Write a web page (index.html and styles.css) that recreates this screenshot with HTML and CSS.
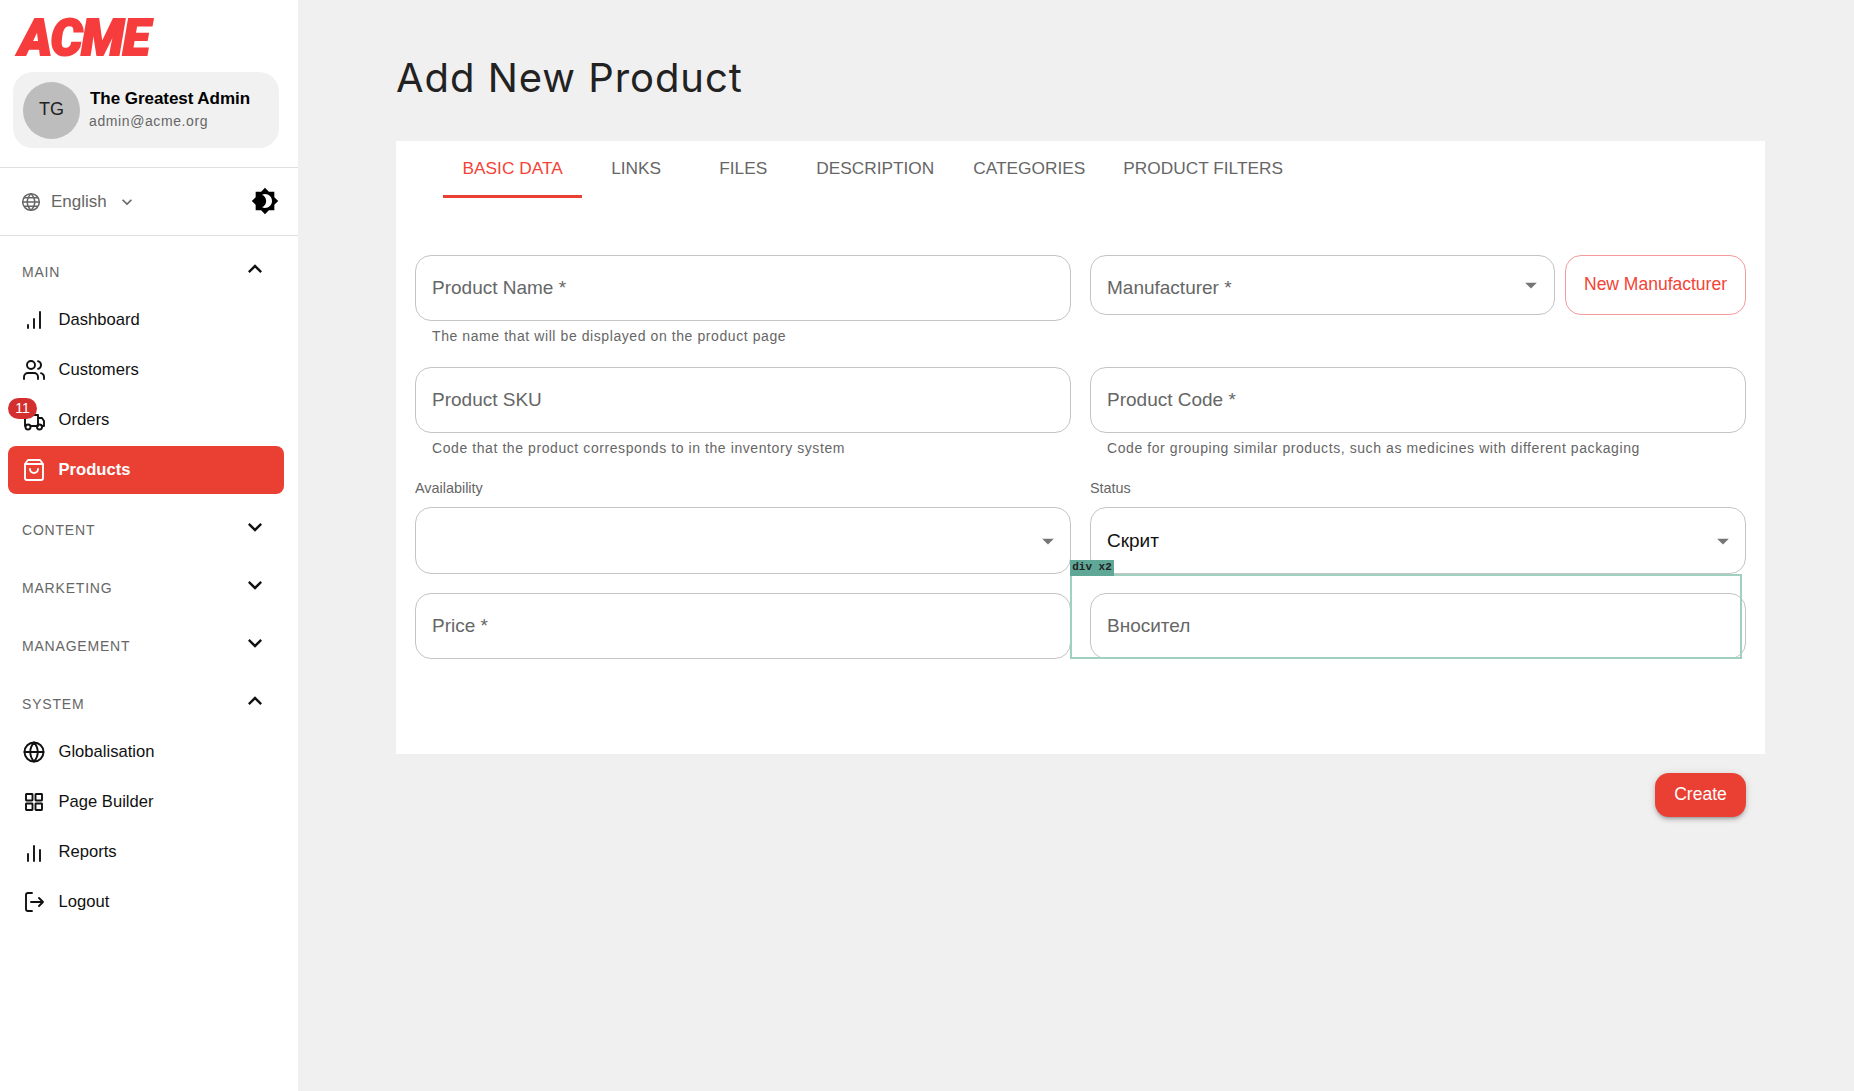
FILE: index.html
```html
<!DOCTYPE html>
<html lang="en">
<head>
    <meta charset="UTF-8">
    <title>Add New Product</title>
    <link rel="stylesheet" href="styles.css">
</head>
<body>
    <div class="layout">
        <aside class="sidebar">
            <div class="logo">ACME</div>
            <div class="user-card">
                <div class="avatar">TG</div>
                <div class="user-text">
                    <div class="user-name">The Greatest Admin</div>
                    <div class="user-mail">admin@acme.org</div>
                </div>
            </div>
            <div class="lang-row">
                <svg class="lang-globe" viewBox="0 0 24 24"><circle cx="12" cy="12" r="10"/><path d="M2 12h20M3.5 7h17M3.5 17h17M12 2c-6 6-6 14 0 20M12 2c6 6 6 14 0 20"/></svg>
                <span class="lang-name">English</span>
                <svg class="lang-chevron" viewBox="0 0 24 24"><path d="M16.59 8.59 12 13.17 7.41 8.59 6 10l6 6 6-6z"/></svg>
                <svg class="theme-icon" viewBox="0 0 24 24"><path d="M20 8.69V4h-4.69L12 .69 8.69 4H4v4.69L.69 12 4 15.31V20h4.69L12 23.31 15.31 20H20v-4.69L23.31 12 20 8.69zM12 18c-.89 0-1.74-.2-2.5-.55C11.56 16.5 13 14.42 13 12s-1.44-4.5-3.5-5.45C10.26 6.2 11.11 6 12 6c3.31 0 6 2.69 6 6s-2.69 6-6 6z"/></svg>
            </div>
            <nav class="nav">
                <div class="nav-head nav-head-open">
                    <span>MAIN</span>
                    <svg viewBox="0 0 24 24"><path d="M12 8l-6 6 1.41 1.41L12 10.83l4.59 4.58L18 14z"/></svg>
                </div>
                <a class="nav-item">
                    <svg class="nav-icon" viewBox="0 0 24 24"><path d="M6 20v-3M12 20v-9M18 20V4"/></svg>
                    Dashboard
                </a>
                <a class="nav-item">
                    <svg class="nav-icon" viewBox="0 0 24 24"><circle cx="9" cy="7" r="4"/><path d="M2 21v-2a4 4 0 0 1 4-4h6a4 4 0 0 1 4 4v2M22 21v-2a4 4 0 0 0-3-3.87M16 3.13a4 4 0 0 1 0 7.75"/></svg>
                    Customers
                </a>
                <a class="nav-item">
                    <svg class="nav-icon" viewBox="0 0 24 24"><path d="M3 18V7h13v11M16 10h4l2 3v5h-2M9 18h7"/><circle cx="6" cy="19" r="2.5"/><circle cx="17.5" cy="19" r="2.5"/></svg>
                    Orders
                    <span class="badge">11</span>
                </a>
                <a class="nav-item active">
                    <svg class="nav-icon" viewBox="0 0 24 24"><path d="M6 2h12l3 4v14a2 2 0 0 1-2 2H5a2 2 0 0 1-2-2V6zM3 6h18M16 11a4 4 0 0 1-8 0"/></svg>
                    Products
                </a>

                <div class="nav-head section-gap">
                    <span>CONTENT</span>
                    <svg viewBox="0 0 24 24"><path d="M16.59 8.59 12 13.17 7.41 8.59 6 10l6 6 6-6z"/></svg>
                </div>
                <div class="nav-head section-gap">
                    <span>MARKETING</span>
                    <svg viewBox="0 0 24 24"><path d="M16.59 8.59 12 13.17 7.41 8.59 6 10l6 6 6-6z"/></svg>
                </div>
                <div class="nav-head section-gap">
                    <span>MANAGEMENT</span>
                    <svg viewBox="0 0 24 24"><path d="M16.59 8.59 12 13.17 7.41 8.59 6 10l6 6 6-6z"/></svg>
                </div>
                <div class="nav-head section-gap nav-head-open">
                    <span>SYSTEM</span>
                    <svg viewBox="0 0 24 24"><path d="M12 8l-6 6 1.41 1.41L12 10.83l4.59 4.58L18 14z"/></svg>
                </div>
                <a class="nav-item">
                    <svg class="nav-icon" viewBox="0 0 24 24"><circle cx="12" cy="12" r="9.500"/><path d="M2.500 12h19M12 2.500c-5 5.500-5 13.500 0 19M12 2.500c5 5.500 5 13.500 0 19"/></svg>
                    Globalisation
                </a>
                <a class="nav-item">
                    <svg class="nav-icon" viewBox="0 0 24 24"><rect x="4" y="4" width="6.500" height="6.500" rx=".5"/><rect x="13.500" y="4" width="6.500" height="6.500" rx=".5"/><rect x="4" y="13.500" width="6.500" height="6.500" rx=".5"/><rect x="13.500" y="13.500" width="6.500" height="6.500" rx=".5"/></svg>
                    Page Builder
                </a>
                <a class="nav-item">
                    <svg class="nav-icon" viewBox="0 0 24 24"><path d="M6 21v-7M12 21V6M18 21V10"/></svg>
                    Reports
                </a>
                <a class="nav-item">
                    <svg class="nav-icon" viewBox="0 0 24 24"><path d="M10 3H6a2 2 0 0 0-2 2v14a2 2 0 0 0 2 2h4M9 12h12M17 8l4 4-4 4"/></svg>
                    Logout
                </a>
            </nav>
        </aside>

        <main class="main">
            <h1 class="page-title">Add New Product</h1>
            <section class="card">
                <div class="tabs">
                    <div class="tab tab-active">BASIC DATA</div>
                    <div class="tab tab-links">LINKS</div>
                    <div class="tab tab-files">FILES</div>
                    <div class="tab tab-desc">DESCRIPTION</div>
                    <div class="tab">CATEGORIES</div>
                    <div class="tab">PRODUCT FILTERS</div>
                </div>
                <form class="form-grid">
                    <div class="field">
                        <input class="input" placeholder="Product Name *">
                        <p class="helper">The name that will be displayed on the product page</p>
                    </div>
                    <div class="field-inline">
                        <div class="input select select-short">
                            <span class="select-text">Manufacturer *</span>
                            <svg class="caret" viewBox="0 0 24 24"><path d="M7 10l5 5 5-5z"/></svg>
                        </div>
                        <button type="button" class="btn-outline">New Manufacturer</button>
                    </div>
                    <div class="field">
                        <input class="input" placeholder="Product SKU">
                        <p class="helper">Code that the product corresponds to in the inventory system</p>
                    </div>
                    <div class="field">
                        <input class="input" placeholder="Product Code *">
                        <p class="helper">Code for grouping similar products, such as medicines with different packaging</p>
                    </div>
                    <div class="field">
                        <label class="field-label">Availability</label>
                        <div class="input select">
                            <span></span>
                            <svg class="caret" viewBox="0 0 24 24"><path d="M7 10l5 5 5-5z"/></svg>
                        </div>
                    </div>
                    <div class="field">
                        <label class="field-label">Status</label>
                        <div class="input select select-filled">
                            <span>Скрит</span>
                            <svg class="caret" viewBox="0 0 24 24"><path d="M7 10l5 5 5-5z"/></svg>
                        </div>
                    </div>
                    <div class="field">
                        <input class="input" placeholder="Price *">
                    </div>
                    <div class="field field-overlay">
                        <input class="input" placeholder="Вносител">
                        <div class="inspect-box"><span class="inspect-tag">div x2</span></div>
                    </div>
                </form>
            </section>
            <div class="actions">
                <button type="button" class="btn-create">Create</button>
            </div>
        </main>
    </div>
</body>
</html>
```

FILE: styles.css
```css
* {
    box-sizing: border-box;
}
html, body {
    margin: 0;
    height: 100%;
}
body {
    background: #f0f0f0;
    font-family: "Liberation Sans", Arial, sans-serif;
    color: #111;
}
.layout {
    display: flex;
    min-height: 1091px;
}

/* sidebar */
.sidebar {
    width: 298px;
    flex-shrink: 0;
    background: #fff;
}
.logo {
    height: 72px;
    padding: 9px 0 0 19px;
    font-family: Roboto, "Liberation Sans", sans-serif;
    font-size: 50px;
    font-weight: 900;
    font-style: italic;
    line-height: 58px;
    color: #f63c3c;
    -webkit-text-stroke: 2px #f63c3c;
    letter-spacing: -1px;
}
.user-card {
    display: flex;
    align-items: center;
    gap: 10px;
    height: 76px;
    margin: 0 19px 19px 13px;
    padding-left: 10px;
    background: #f1f1f1;
    border-radius: 20px;
}
.avatar {
    width: 57px;
    height: 57px;
    padding-bottom: 2px;
    border-radius: 50%;
    background: #bdbdbd;
    display: flex;
    align-items: center;
    justify-content: center;
    font-size: 18px;
    color: #222;
}
.user-text {
    margin-bottom: 2px;
}
.user-name {
    font-size: 17px;
    font-weight: 700;
    color: #000;
    line-height: 24px;
    letter-spacing: -.05px;
}
.user-mail {
    margin-left: -1px;
    font-size: 14px;
    letter-spacing: .6px;
    color: #666;
    line-height: 21px;
}
.lang-row {
    display: flex;
    align-items: center;
    height: 69px;
    padding: 0 19px 0 21px;
    border-top: 1px solid #e0e0e0;
    border-bottom: 1px solid #e0e0e0;
    color: #666;
    font-size: 17px;
}
.lang-globe {
    width: 20px;
    height: 20px;
    fill: none;
    stroke: #666;
    stroke-width: 1.800;
}
.lang-name {
    margin-left: 10px;
}
.lang-chevron {
    width: 20px;
    height: 20px;
    margin-left: 10px;
    fill: #666;
}
.theme-icon {
    width: 28px;
    height: 28px;
    margin-left: auto;
    margin-bottom: 2px;
    fill: #000;
}
.nav {
    padding-top: 14px;
}
.nav-head {
    display: flex;
    align-items: center;
    justify-content: space-between;
    height: 44px;
    padding: 0 29px 0 22px;
    font-size: 14px;
    letter-spacing: .8px;
    color: #666;
}
.nav-head svg {
    width: 28px;
    height: 28px;
    margin-bottom: 6px;
    fill: #111;
}
.nav-head-open {
    margin-bottom: 1px;
}
.section-gap {
    margin-top: 14px;
}
.nav-item {
    position: relative;
    display: flex;
    align-items: center;
    gap: 12.500px;
    height: 50px;
    margin: 0 14px 0 8px;
    padding-left: 14px;
    border-radius: 8px;
    font-size: 16.600px;
    color: #111;
}
.nav-icon {
    width: 24px;
    height: 24px;
    fill: none;
    stroke: #111;
    stroke-width: 1.900;
    stroke-linecap: round;
    stroke-linejoin: round;
}
.nav-item.active {
    height: 48px;
    margin-top: 1px;
    background: #ea4033;
    color: #fff;
    font-weight: 700;
}
.nav-item.active .nav-icon {
    stroke: #fff;
}
.badge {
    position: absolute;
    left: 0;
    top: 3px;
    min-width: 29px;
    height: 21px;
    border-radius: 11px;
    background: #d32f2f;
    color: #fff;
    font-size: 14px;
    font-weight: 400;
    line-height: 20px;
    text-align: center;
}

/* main */
.main {
    flex: 1;
    padding: 54px 89px 0 98px;
}
.page-title {
    margin: 0 0 39px;
    font-family: Inter, "Noto Sans", sans-serif;
    font-size: 40px;
    font-weight: 400;
    letter-spacing: .95px;
    line-height: 48px;
    color: #222;
}
.card {
    height: 613px;
    background: #fff;
    padding: 0 19px;
}
.tabs {
    display: flex;
    height: 57px;
    margin-left: 28px;
}
.tab {
    height: 57px;
    padding: 17px 19px 0;
    font-size: 17.300px;
    line-height: 20px;
    color: #666;
    text-align: center;
}
.tab-links {
    width: 108px;
}
.tab-files {
    width: 106px;
    margin-right: 1px;
}
.tab-desc {
    margin-right: 1px;
}
.tab-active {
    padding: 17px 19.500px 0;
    color: #f44336;
    border-bottom: 3px solid #ea4033;
}
.form-grid {
    display: grid;
    grid-template-columns: 1fr 1fr;
    gap: 19px;
    margin-top: 57px;
}
.field-overlay {
    position: relative;
}
.input {
    display: block;
    width: 100%;
    height: 66px;
    padding: 0 16px;
    border: 1px solid #c4c4c4;
    border-radius: 16px;
    background: #fff;
    font-family: inherit;
    font-size: 19px;
    color: #666;
    outline: none;
}
.input::placeholder {
    color: #666;
    opacity: 1;
}
.select {
    display: flex;
    align-items: center;
    justify-content: space-between;
    height: 67px;
    padding-right: 8px;
}
.select-short {
    flex: 1;
    height: 60px;
    padding-right: 9px;
}
.select-text {
    padding-top: 6px;
}
.select-filled {
    color: #111;
}
.caret {
    width: 28px;
    height: 28px;
    fill: #757575;
}
.helper {
    margin: 4px 0 1px 17px;
    font-size: 14px;
    letter-spacing: .58px;
    line-height: 22px;
    color: #666;
}
.field-inline {
    display: flex;
    gap: 10px;
    align-items: flex-start;
}
.btn-outline {
    width: 181px;
    height: 60px;
    padding: 0 0 1px;
    border: 1px solid #f59a9a;
    border-radius: 16px;
    background: #fff;
    color: #f44336;
    font-family: inherit;
    font-size: 17.500px;
}
.field-label {
    display: block;
    margin: -1px 0 8px;
    font-size: 14.400px;
    line-height: 21px;
    color: #666;
}
.inspect-box {
    position: absolute;
    left: -20px;
    top: -19px;
    width: 672px;
    height: 85px;
    border: 2px solid #9fd0c0;
}
.inspect-tag {
    position: absolute;
    left: -2px;
    bottom: 100%;
    width: 44px;
    height: 16px;
    background: #5fa897;
    color: #222;
    font-family: "Liberation Mono", "DejaVu Sans Mono", monospace;
    font-size: 11px;
    font-weight: 700;
    line-height: 15px;
    text-align: center;
}
.actions {
    display: flex;
    justify-content: flex-end;
    padding: 19px 19px 0 0;
}
.btn-create {
    width: 91px;
    height: 44px;
    padding: 0 0 1px;
    border: none;
    border-radius: 14px;
    background: #ea4033;
    color: #fff;
    font-family: inherit;
    font-size: 17.500px;
    box-shadow: 0 3px 3px -2px rgba(0,0,0,.2), 0 3px 4px rgba(0,0,0,.14), 0 1px 8px rgba(0,0,0,.12);
}
```
